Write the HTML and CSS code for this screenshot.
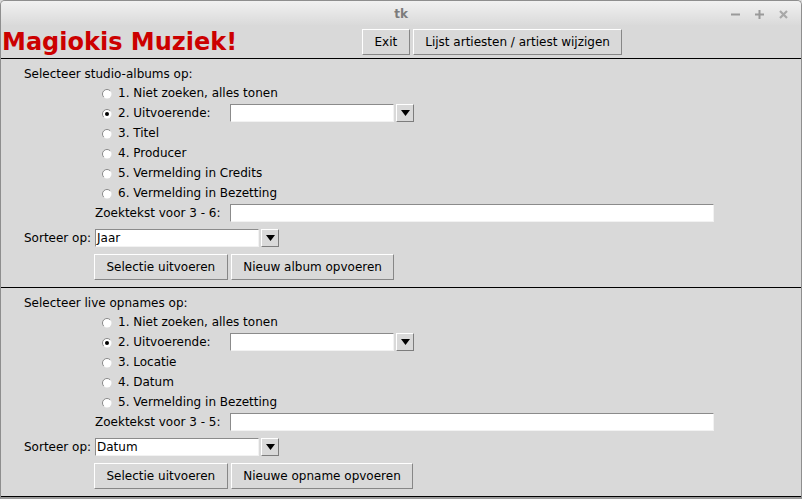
FILE: index.html
```html
<!DOCTYPE html>
<html>
<head>
<meta charset="utf-8">
<title>tk</title>
<link rel="stylesheet" href="styles.css">
</head>
<body>
<div class="window">
  <div class="titlebar">
    <span class="title">tk</span>
    <div class="wm-controls">
      <svg class="wm-icon" width="9" height="9" viewBox="0 0 9 9"><rect x="0" y="3.5" width="9" height="2" fill="#9a9a9a"/></svg>
      <svg class="wm-icon" width="9" height="9" viewBox="0 0 9 9"><rect x="0" y="3.5" width="9" height="2" fill="#9a9a9a"/><rect x="3.5" y="0" width="2" height="9" fill="#9a9a9a"/></svg>
      <svg class="wm-icon" width="9" height="9" viewBox="0 0 9 9"><path d="M1 1 L8 8 M8 1 L1 8" stroke="#a8a8a8" stroke-width="2.2" fill="none"/></svg>
    </div>
  </div>

  <div class="header">
    <div class="app-title">Magiokis Muziek!</div>
    <div class="header-buttons">
      <button class="btn">Exit</button>
      <button class="btn">Lijst artiesten / artiest wijzigen</button>
    </div>
  </div>

  <section class="panel">
    <div class="panel-label">Selecteer studio-albums op:</div>
    <div class="radio-row"><span class="radio"><svg class="ind" width="10" height="10" viewBox="0 0 10 10"><circle cx="5" cy="5" r="4.5" fill="#fff"/><path d="M1.8 8.2 A4.5 4.5 0 0 1 8.2 1.8" fill="none" stroke="#8a8a8a" stroke-width="1"/></svg>1. Niet zoeken, alles tonen</span></div>
    <div class="radio-row"><span class="radio"><svg class="ind" width="10" height="10" viewBox="0 0 10 10"><circle cx="5" cy="5" r="4.5" fill="#fff"/><path d="M1.8 8.2 A4.5 4.5 0 0 1 8.2 1.8" fill="none" stroke="#8a8a8a" stroke-width="1"/><circle cx="5" cy="5" r="2" fill="#000"/></svg>2. Uitvoerende:</span>
      <div class="combo"><div class="entry combo-entry"></div><div class="arrow"><svg width="9" height="6" viewBox="0 0 9 6"><polygon points="0,0 9,0 4.5,6" fill="#000"/></svg></div></div>
    </div>
    <div class="radio-row"><span class="radio"><svg class="ind" width="10" height="10" viewBox="0 0 10 10"><circle cx="5" cy="5" r="4.5" fill="#fff"/><path d="M1.8 8.2 A4.5 4.5 0 0 1 8.2 1.8" fill="none" stroke="#8a8a8a" stroke-width="1"/></svg>3. Titel</span></div>
    <div class="radio-row"><span class="radio"><svg class="ind" width="10" height="10" viewBox="0 0 10 10"><circle cx="5" cy="5" r="4.5" fill="#fff"/><path d="M1.8 8.2 A4.5 4.5 0 0 1 8.2 1.8" fill="none" stroke="#8a8a8a" stroke-width="1"/></svg>4. Producer</span></div>
    <div class="radio-row"><span class="radio"><svg class="ind" width="10" height="10" viewBox="0 0 10 10"><circle cx="5" cy="5" r="4.5" fill="#fff"/><path d="M1.8 8.2 A4.5 4.5 0 0 1 8.2 1.8" fill="none" stroke="#8a8a8a" stroke-width="1"/></svg>5. Vermelding in Credits</span></div>
    <div class="radio-row"><span class="radio"><svg class="ind" width="10" height="10" viewBox="0 0 10 10"><circle cx="5" cy="5" r="4.5" fill="#fff"/><path d="M1.8 8.2 A4.5 4.5 0 0 1 8.2 1.8" fill="none" stroke="#8a8a8a" stroke-width="1"/></svg>6. Vermelding in Bezetting</span></div>
    <div class="zoek-row"><span class="zoek-label">Zoektekst voor 3 - 6:</span><div class="entry wide"></div></div>
    <div class="sort-row"><span class="sort-label">Sorteer op:</span>
      <div class="combo"><div class="entry combo-entry">Jaar</div><div class="arrow"><svg width="9" height="6" viewBox="0 0 9 6"><polygon points="0,0 9,0 4.5,6" fill="#000"/></svg></div></div>
    </div>
    <div class="btn-row">
      <button class="btn">Selectie uitvoeren</button>
      <button class="btn">Nieuw album opvoeren</button>
    </div>
  </section>

  <section class="panel panel-last">
    <div class="panel-label">Selecteer live opnames op:</div>
    <div class="radio-row"><span class="radio"><svg class="ind" width="10" height="10" viewBox="0 0 10 10"><circle cx="5" cy="5" r="4.5" fill="#fff"/><path d="M1.8 8.2 A4.5 4.5 0 0 1 8.2 1.8" fill="none" stroke="#8a8a8a" stroke-width="1"/></svg>1. Niet zoeken, alles tonen</span></div>
    <div class="radio-row"><span class="radio"><svg class="ind" width="10" height="10" viewBox="0 0 10 10"><circle cx="5" cy="5" r="4.5" fill="#fff"/><path d="M1.8 8.2 A4.5 4.5 0 0 1 8.2 1.8" fill="none" stroke="#8a8a8a" stroke-width="1"/><circle cx="5" cy="5" r="2" fill="#000"/></svg>2. Uitvoerende:</span>
      <div class="combo"><div class="entry combo-entry"></div><div class="arrow"><svg width="9" height="6" viewBox="0 0 9 6"><polygon points="0,0 9,0 4.5,6" fill="#000"/></svg></div></div>
    </div>
    <div class="radio-row"><span class="radio"><svg class="ind" width="10" height="10" viewBox="0 0 10 10"><circle cx="5" cy="5" r="4.5" fill="#fff"/><path d="M1.8 8.2 A4.5 4.5 0 0 1 8.2 1.8" fill="none" stroke="#8a8a8a" stroke-width="1"/></svg>3. Locatie</span></div>
    <div class="radio-row"><span class="radio"><svg class="ind" width="10" height="10" viewBox="0 0 10 10"><circle cx="5" cy="5" r="4.5" fill="#fff"/><path d="M1.8 8.2 A4.5 4.5 0 0 1 8.2 1.8" fill="none" stroke="#8a8a8a" stroke-width="1"/></svg>4. Datum</span></div>
    <div class="radio-row"><span class="radio"><svg class="ind" width="10" height="10" viewBox="0 0 10 10"><circle cx="5" cy="5" r="4.5" fill="#fff"/><path d="M1.8 8.2 A4.5 4.5 0 0 1 8.2 1.8" fill="none" stroke="#8a8a8a" stroke-width="1"/></svg>5. Vermelding in Bezetting</span></div>
    <div class="zoek-row"><span class="zoek-label">Zoektekst voor 3 - 5:</span><div class="entry wide"></div></div>
    <div class="sort-row"><span class="sort-label">Sorteer op:</span>
      <div class="combo"><div class="entry combo-entry">Datum</div><div class="arrow"><svg width="9" height="6" viewBox="0 0 9 6"><polygon points="0,0 9,0 4.5,6" fill="#000"/></svg></div></div>
    </div>
    <div class="btn-row">
      <button class="btn">Selectie uitvoeren</button>
      <button class="btn">Nieuwe opname opvoeren</button>
    </div>
  </section>
</div>
</body>
</html>
```
FILE: styles.css
```css
* { box-sizing: border-box; }
html, body { margin: 0; padding: 0; }
body {
  width: 802px;
  height: 499px;
  overflow: hidden;
  background: #d9d9d9;
  font-family: "DejaVu Sans", sans-serif;
  font-size: 12px;
  color: #000;
}
.window {
  width: 802px;
  height: 499px;
  border: 1px solid #8e8e8e;
  border-bottom: 2px solid #9a9a9a;
  border-radius: 5px 5px 0 0;
  background: #d9d9d9;
  display: flex;
  flex-direction: column;
  overflow: hidden;
}
.titlebar {
  height: 24px;
  flex: none;
  display: grid;
  grid-template-columns: 1fr auto 1fr;
  align-items: center;
  padding-top: 2px;
  background: linear-gradient(#f1f1f1, #dadada);
}
.title {
  grid-column: 2;
  font-weight: bold;
  font-size: 12px;
  color: #7c7c7c;
}
.wm-controls {
  grid-column: 3;
  justify-self: end;
  display: flex;
  gap: 15px;
  padding-right: 13px;
}
.wm-icon { display: block; }
.header {
  height: 33px;
  flex: none;
  display: flex;
  align-items: center;
}
.app-title {
  width: 361px;
  padding-left: 1px;
  font-size: 24px;
  font-weight: bold;
  color: #cc0000;
  white-space: nowrap;
}
.header-buttons, .btn-row {
  display: flex;
  gap: 3px;
}
.btn {
  height: 26px;
  padding: 0 11.5px;
  margin: 0;
  border: 1px solid;
  border-color: #ffffff #878787 #878787 #ffffff;
  background: #d9d9d9;
  font-family: "DejaVu Sans", sans-serif;
  font-size: 12px;
  color: #000;
  white-space: nowrap;
}
.panel {
  flex: none;
  border-top: 1px solid #000;
  padding-bottom: 7px;
}
.panel-last { border-bottom: 1px solid #000; }
.panel-label {
  margin-top: 5px;
  height: 19px;
  padding-left: 23px;
  display: flex;
  align-items: center;
}
.radio-row {
  height: 20px;
  padding-left: 101px;
  display: flex;
  align-items: center;
}
.radio {
  width: 128px;
  display: flex;
  align-items: center;
  white-space: nowrap;
}
.ind {
  flex: none;
  margin-right: 6px;
  margin-top: 2px;
}
.zoek-row {
  height: 20px;
  padding-left: 94px;
  display: flex;
  align-items: center;
}
.zoek-label { width: 135px; white-space: nowrap; }
.sort-row {
  height: 21px;
  margin-top: 4px;
  padding-left: 23px;
  display: flex;
  align-items: center;
}
.sort-label { width: 71px; white-space: nowrap; }
.entry {
  height: 18px;
  border: 1px solid;
  border-color: #8b8b8b #f2f2f2 #f2f2f2 #8b8b8b;
  background: #fff;
  padding-left: 1px;
  display: flex;
  align-items: center;
}
.entry.wide { width: 484px; }
.combo { display: flex; gap: 2px; }
.combo-entry { width: 164px; }
.arrow {
  width: 18px;
  height: 18px;
  border: 1px solid;
  border-color: #ffffff #7d7d7d #7d7d7d #ffffff;
  background: #d9d9d9;
  display: flex;
  align-items: center;
  justify-content: center;
}
.arrow svg { display: block; }
.btn-row {
  margin-top: 6px;
  padding-left: 93px;
}
```
